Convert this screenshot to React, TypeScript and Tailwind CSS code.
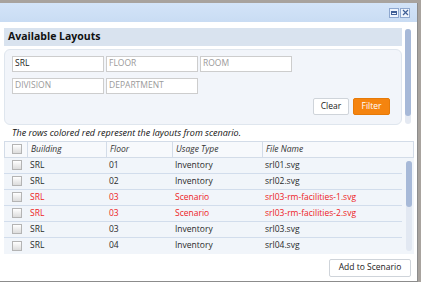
import React from "react";

interface LayoutRow {
  building: string;
  floor: string;
  usage: string;
  file: string;
  scenario?: boolean;
}

const rows: LayoutRow[] = [
  { building: "SRL", floor: "01", usage: "Inventory", file: "srl01.svg" },
  { building: "SRL", floor: "02", usage: "Inventory", file: "srl02.svg" },
  { building: "SRL", floor: "03", usage: "Scenario", file: "srl03-rm-facilities-1.svg", scenario: true },
  { building: "SRL", floor: "03", usage: "Scenario", file: "srl03-rm-facilities-2.svg", scenario: true },
  { building: "SRL", floor: "03", usage: "Inventory", file: "srl03.svg" },
  { building: "SRL", floor: "04", usage: "Inventory", file: "srl04.svg" },
];

const cols = "grid grid-cols-[23px_79px_66px_90px_1fr]";

function Check() {
  return (
    <span className="block h-[10px] w-[10px] border border-[#b4b4b4] bg-gradient-to-b from-[#ffffff] to-[#dcdcdc]" />
  );
}

function Field({ value, placeholder }: { value?: string; placeholder?: string }) {
  return (
    <div
      className={`flex h-[16px] w-[92px] items-center border border-[#cdcdcd] bg-white px-[2px] ${
        value ? "text-[#222]" : "text-[#9a9a9a]"
      }`}
    >
      {value || placeholder}
    </div>
  );
}

export default function App() {
  return (
    <div
      className="flex h-[282px] w-[421px] flex-col bg-[#a8a39e] pt-[3px] pr-[3px] text-[8.5px] text-[#2a2a2a]"
      style={{ fontFamily: '"Open Sans", "Liberation Sans", sans-serif' }}
    >
      <div className="flex flex-1 flex-col border-r border-b border-[#8c8c8c] bg-white">
        {/* title bar */}
        <div className="flex h-[19px] items-center justify-end gap-[1px] bg-gradient-to-b from-[#d3e4f8] to-[#c9dcf3] pr-[7px]">
          <span className="flex h-[10px] w-[10px] items-center justify-center border border-[#8ea8cf] bg-[#eef4fc]">
            <span className="h-[4px] w-[6px] border border-t-2 border-[#3f5f96]" />
          </span>
          <span className="flex h-[10px] w-[10px] items-center justify-center border border-[#8ea8cf] bg-[#eef4fc]">
            <svg width="7" height="7" viewBox="0 0 7 7">
              <path d="M1 1L6 6M6 1L1 6" stroke="#3f5f96" strokeWidth="1.2" />
            </svg>
          </span>
        </div>

        {/* top section */}
        <div className="mt-[2px] flex h-[101px] pl-[4px]">
          <div className="flex w-[398px] flex-col">
            <div className="mt-[4px] flex h-[18px] items-center bg-[#d9e3ef] pl-[4px] text-[10.5px] font-bold text-[#111]">
              Available Layouts
            </div>
            <div className="mt-[3px] flex h-[77px] flex-col rounded-[6px] border border-[#dfe6ee] bg-[#f2f5fa] pl-[7px] pt-[6px]">
              <div className="flex gap-[2px]">
                <Field value="SRL" />
                <Field placeholder="FLOOR" />
                <Field placeholder="ROOM" />
              </div>
              <div className="mt-[6px] flex gap-[2px]">
                <Field placeholder="DIVISION" />
                <Field placeholder="DEPARTMENT" />
              </div>
              <div className="mt-[4px] flex justify-end gap-[4px] pr-[11px]">
                <button className="h-[17px] w-[36px] rounded-[2px] border border-[#cfd4da] bg-white text-[8.5px] text-[#222]">
                  Clear
                </button>
                <button className="h-[17px] w-[37px] rounded-[2px] border border-[#e67a08] bg-[#f5840f] text-[8.5px] text-white">
                  Filter
                </button>
              </div>
            </div>
          </div>
          <div className="ml-[3px] mt-[5px] flex h-[95px] w-[6px] flex-col rounded-[3px] bg-[#e4e9f2]">
            <div className="h-[87px] rounded-[3px] bg-[#a7b9d8]" />
          </div>
        </div>

        <div className="mt-[1px] pl-[12px] text-[9px] italic text-[#111]">
          The rows colored red represent the layouts from scenario.
        </div>

        {/* table */}
        <div className="mt-[1px] ml-[4px] mr-[3px] flex flex-col">
          <div className={`${cols} h-[17px] items-center border border-[#d3dce8] bg-[#f7f9fc] italic text-[#333]`}>
            <div className="flex h-full items-center justify-center border-r border-[#d3dce8] pl-[2px]">
              <Check />
            </div>
            <div className="flex h-full items-center border-r border-[#d3dce8] pl-[3px]">Building</div>
            <div className="flex h-full items-center border-r border-[#d3dce8] pl-[3px]">Floor</div>
            <div className="flex h-full items-center border-r border-[#d3dce8] pl-[3px]">Usage Type</div>
            <div className="flex h-full items-center pl-[3px]">File Name</div>
          </div>
          <div className="flex h-[96px] bg-[#f1f5fa]">
            <div className="flex w-[398px] flex-col">
              {rows.map((r, i) => (
                <div
                  key={i}
                  className={`${cols} h-[16px] items-center ${
                    i < rows.length - 1 ? "border-b border-[#d2ddec]" : ""
                  } ${r.scenario ? "text-[#ee1c25]" : "text-[#2a2a2a]"}`}
                >
                  <div className="flex justify-center pl-[2px]">
                    <Check />
                  </div>
                  <div className="pl-[3px]">{r.building}</div>
                  <div className="pl-[3px]">{r.floor}</div>
                  <div className="pl-[3px]">{r.usage}</div>
                  <div className="pl-[3px]">{r.file}</div>
                </div>
              ))}
            </div>
            <div className="ml-[4px] mt-[3px] flex h-[90px] w-[6px] flex-col rounded-[3px] bg-[#e2e8f2]">
              <div className="h-[46px] rounded-[3px] bg-[#a7b9d8]" />
            </div>
          </div>
        </div>

        {/* footer */}
        <div className="mt-[5px] flex justify-end pr-[6px]">
          <button className="h-[18px] w-[82px] rounded-[2px] border border-[#cfd4da] bg-white text-[8.5px] text-[#222]">
            Add to Scenario
          </button>
        </div>
      </div>
    </div>
  );
}
